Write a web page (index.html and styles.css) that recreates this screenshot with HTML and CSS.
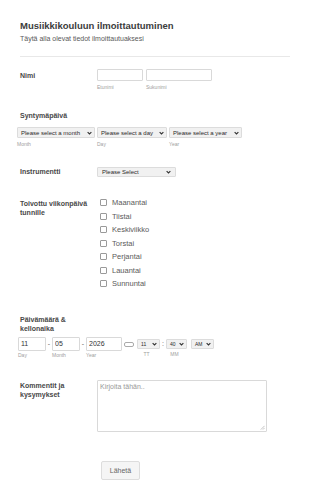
FILE: index.html
```html
<!DOCTYPE html>
<html lang="fi">
<head>
  <meta charset="UTF-8">
  <title>Musiikkikouluun ilmoittautuminen</title>
  <link rel="stylesheet" href="styles.css">
</head>
<body>
  <form class="form">
    <div class="head">
      <h1>Musiikkikouluun ilmoittautuminen</h1>
      <p>Täytä alla olevat tiedot ilmoittautuaksesi</p>
    </div>

    <div class="row row-name">
      <label class="lbl">Nimi</label>
      <div class="fields">
        <div class="field">
          <input class="txt w-first" type="text">
          <span class="sub">Etunimi</span>
        </div>
        <div class="field">
          <input class="txt w-last" type="text">
          <span class="sub">Sukunimi</span>
        </div>
      </div>
    </div>

    <div class="row stack row-birth">
      <label class="lbl">Syntymäpäivä</label>
      <div class="fields tight">
        <div class="field">
          <div class="select w-month"><span>Please select a month</span><svg viewBox="0 0 8 6"><path d="M1 1.5l3 3 3-3"/></svg></div>
          <span class="sub">Month</span>
        </div>
        <div class="field">
          <div class="select w-day"><span>Please select a day</span><svg viewBox="0 0 8 6"><path d="M1 1.5l3 3 3-3"/></svg></div>
          <span class="sub">Day</span>
        </div>
        <div class="field">
          <div class="select w-year"><span>Please select a year</span><svg viewBox="0 0 8 6"><path d="M1 1.5l3 3 3-3"/></svg></div>
          <span class="sub">Year</span>
        </div>
      </div>
    </div>

    <div class="row row-instr">
      <label class="lbl">Instrumentti</label>
      <div class="select w-instr"><span>Please Select</span><svg viewBox="0 0 8 6"><path d="M1 1.5l3 3 3-3"/></svg></div>
    </div>

    <div class="row row-days">
      <label class="lbl">Toivottu viikonpäivä tunnille</label>
      <ul class="checks">
        <li><span class="box"></span>Maanantai</li>
        <li><span class="box"></span>Tiistai</li>
        <li><span class="box"></span>Keskiviikko</li>
        <li><span class="box"></span>Torstai</li>
        <li><span class="box"></span>Perjantai</li>
        <li><span class="box"></span>Lauantai</li>
        <li><span class="box"></span>Sunnuntai</li>
      </ul>
    </div>

    <div class="row stack row-date">
      <label class="lbl">Päivämäärä &amp;<br>kellonaika</label>
      <div class="fields date">
        <div class="field">
          <input class="txt dt w-dd" type="text" value="11">
          <span class="sub">Day</span>
        </div>
        <span class="sep">-</span>
        <div class="field">
          <input class="txt dt w-dd" type="text" value="05">
          <span class="sub">Month</span>
        </div>
        <span class="sep">-</span>
        <div class="field">
          <input class="txt dt w-yy" type="text" value="2026">
          <span class="sub">Year</span>
        </div>
        <span class="cal"></span>
        <div class="field">
          <div class="select sm w-hh"><span>11</span><svg viewBox="0 0 8 6"><path d="M1 1.5l3 3 3-3"/></svg></div>
          <span class="sub center">TT</span>
        </div>
        <span class="colon">:</span>
        <div class="field">
          <div class="select sm w-mm"><span>40</span><svg viewBox="0 0 8 6"><path d="M1 1.5l3 3 3-3"/></svg></div>
          <span class="sub center">MM</span>
        </div>
        <div class="field ampm">
          <div class="select sm w-ap"><span>AM</span><svg viewBox="0 0 8 6"><path d="M1 1.5l3 3 3-3"/></svg></div>
        </div>
      </div>
    </div>

    <div class="row row-comments">
      <label class="lbl">Kommentit ja kysymykset</label>
      <div class="area-wrap">
        <textarea class="area" placeholder="Kirjoita tähän.."></textarea>
        <svg class="grip" viewBox="0 0 6 6"><path d="M5.5 1L1 5.5M5.5 3.5L3.5 5.5"/></svg>
      </div>
    </div>

    <div class="submit">
      <button type="button">Lähetä</button>
    </div>
  </form>
</body>
</html>
```

FILE: styles.css
```css
body { margin: 0; background: #fff; font-family: "Liberation Sans", Arial, sans-serif; color: #555; }
.form { padding: 20px 20px 0 18px; width: 272px; }

.head { margin-left: 2px; padding-bottom: 13px; border-bottom: 1px solid #e8e8e8; }
.head h1 { margin: 0; font-size: 9.5px; line-height: 11px; font-weight: bold; color: #3c3c3c; }
.head p { margin: 3px 0 0; font-size: 7px; line-height: 9px; color: #595959; }

.row { display: flex; align-items: flex-start; }
.row.stack { flex-direction: column; }
.lbl { display: block; width: 77px; flex: none; padding-left: 2px; font-size: 7px; line-height: 9px; font-weight: bold; color: #484848; }
.stack .lbl { width: auto; }

.fields { display: flex; gap: 3px; }
.fields.tight { gap: 2px; }
.field { display: flex; flex-direction: column; }
.sub { font-size: 5px; line-height: 6px; color: #a0a0a0; margin-top: 3px; }
.sub.center { text-align: center; padding-right: 4px; }

.txt { box-sizing: border-box; height: 12px; margin: 0; padding: 0 2px; border: 1px solid #d9d9d9; border-radius: 1px; background: #fff; font: 7px "Liberation Sans", Arial, sans-serif; color: #333; outline: none; }
.w-first { width: 46px; }
.w-last { width: 66px; }

.select { box-sizing: border-box; display: flex; align-items: center; justify-content: space-between; height: 11px; padding: 0 2px 0 3px; border: 1px solid #dcdcdc; border-radius: 1px; background: #f1f1f1; font-size: 6px; color: #2a2a2a; white-space: nowrap; overflow: hidden; }
.select svg { width: 5px; height: 4px; flex: none; }
.select path { fill: none; stroke: #333; stroke-width: 1.8; }
.w-month { width: 78px; }
.w-day { width: 70px; }
.w-year { width: 73px; }
.w-instr { width: 79px; height: 10px; padding-left: 4px; padding-right: 4px; }

.row-name { margin-top: 12px; }
.row-name .lbl { padding-top: 2px; }
.row-birth { margin-top: 21px; }
.row-birth .fields { margin-top: 7px; margin-left: -1px; }
.row-instr { margin-top: 20px; }
.row-days { margin-top: 19px; }
.row-days .lbl { padding-top: 3px; }

.checks { list-style: none; margin: 0 0 0 3px; padding: 0; }
.checks li { display: flex; align-items: center; height: 13.5px; font-size: 7.5px; color: #5a5a5a; }
.box { box-sizing: border-box; width: 7px; height: 7px; margin-right: 5px; border: 1px solid #9a9a9a; border-radius: 1px; background: #fff; }

.row-date { margin-top: 24px; }
.date { margin-top: 4px; gap: 0; align-items: flex-start; }
.dt { height: 14px; padding: 0 2px; font-size: 7px; }
.w-dd { width: 28px; }
.w-yy { width: 36px; }
.sep { width: 6px; text-align: center; font-size: 7px; line-height: 14px; color: #666; }
.cal { width: 8px; height: 3px; margin: 5px 3px 0 2px; border: 1px solid #aaa; border-radius: 2px; }
.colon { width: 6px; text-align: center; font-size: 7px; line-height: 13px; color: #666; }
.select.sm { height: 10px; margin-top: 2px; padding: 0 2px 0 3px; font-size: 5px; }
.w-hh { width: 23px; }
.w-mm { width: 21px; }
.w-ap { width: 23px; }
.ampm { margin-left: 4px; }
.date .sub { margin-top: 1px; }
.date .field:has(.sm) .sub { margin-top: 2px; }

.row-comments { margin-top: 22px; }
.row-comments .lbl { padding-top: 1px; }
.area-wrap { position: relative; width: 170px; height: 52px; }
.area { box-sizing: border-box; display: block; width: 170px; height: 52px; margin: 0; padding: 2px; border: 1px solid #d9d9d9; border-radius: 1px; font: 7px "Liberation Sans", Arial, sans-serif; color: #333; resize: none; }
.area::placeholder { color: #999; }
.grip { position: absolute; right: 2px; bottom: 2px; width: 5px; height: 5px; }
.grip path { fill: none; stroke: #999; stroke-width: 0.7; }

.submit { padding: 27px 0 20px 83px; }
.submit button { box-sizing: border-box; width: 39px; height: 19px; padding: 0; border: 1px solid #ddd; border-radius: 2px; background: #f5f5f5; font: 7px "Liberation Sans", Arial, sans-serif; color: #666; }
```
